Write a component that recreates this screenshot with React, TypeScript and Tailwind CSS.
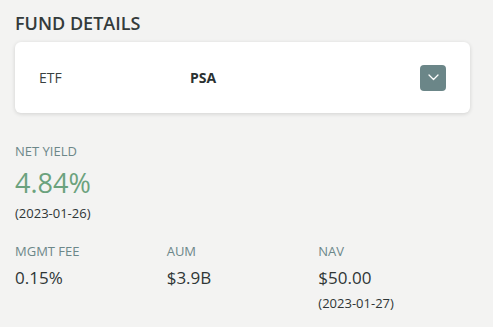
import React from 'react'

const Stat = ({ label, value, note }: { label: string; value: string; note?: string }) => (
  <div>
    <div className="text-[13px] leading-[18px] text-[#6c8789]">{label}</div>
    <div className="mt-[7px] text-[17px] leading-[22px] text-[#2f3636]">{value}</div>
    {note && <div className="mt-[5px] text-[13px] leading-[18px] text-[#2f3636]">{note}</div>}
  </div>
)

export default function App() {
  return (
    <div
      className="min-h-screen w-full bg-[#f3f3f2] px-[15px] pt-[11px] pb-4 text-[#2f3636]"
      style={{ fontFamily: '"Open Sans", "Noto Sans", sans-serif' }}
    >
      {/* Header */}
      <h2 className="text-[18px] leading-[24px] font-semibold text-[#343b3b]">FUND DETAILS</h2>

      {/* Fund selector card */}
      <div className="mt-[7px] flex h-[71px] w-[455px] items-center rounded-md bg-white px-6 shadow-[0_1px_4px_rgba(0,0,0,0.14)]">
        <div className="w-[151px] text-[14px] text-[#3a4141]">ETF</div>
        <div className="flex-1 text-[14px] font-bold text-[#2b3131]">PSA</div>
        <button className="flex h-[26px] w-[26px] items-center justify-center rounded-[4px] bg-[#6b8688]">
          <svg width="11" height="7" viewBox="0 0 11 7" fill="none">
            <path d="M1 1l4.5 4.5L10 1" stroke="white" strokeWidth="1.3" strokeLinecap="round" strokeLinejoin="round" />
          </svg>
        </button>
      </div>

      {/* Net yield */}
      <div className="mt-[29px]">
        <div className="text-[13px] leading-[18px] text-[#6c8789]">NET YIELD</div>
        <div className="mt-[6px] text-[27px] leading-[34px] text-[#6ba27d]">4.84%</div>
        <div className="mt-[4px] text-[13px] leading-[18px] text-[#2f3636]">(2023-01-26)</div>
      </div>

      {/* Other stats */}
      <div className="mt-[20px] grid w-[455px] grid-cols-3">
        <Stat label="MGMT FEE" value="0.15%" />
        <Stat label="AUM" value="$3.9B" />
        <Stat label="NAV" value="$50.00" note="(2023-01-27)" />
      </div>
    </div>
  )
}
